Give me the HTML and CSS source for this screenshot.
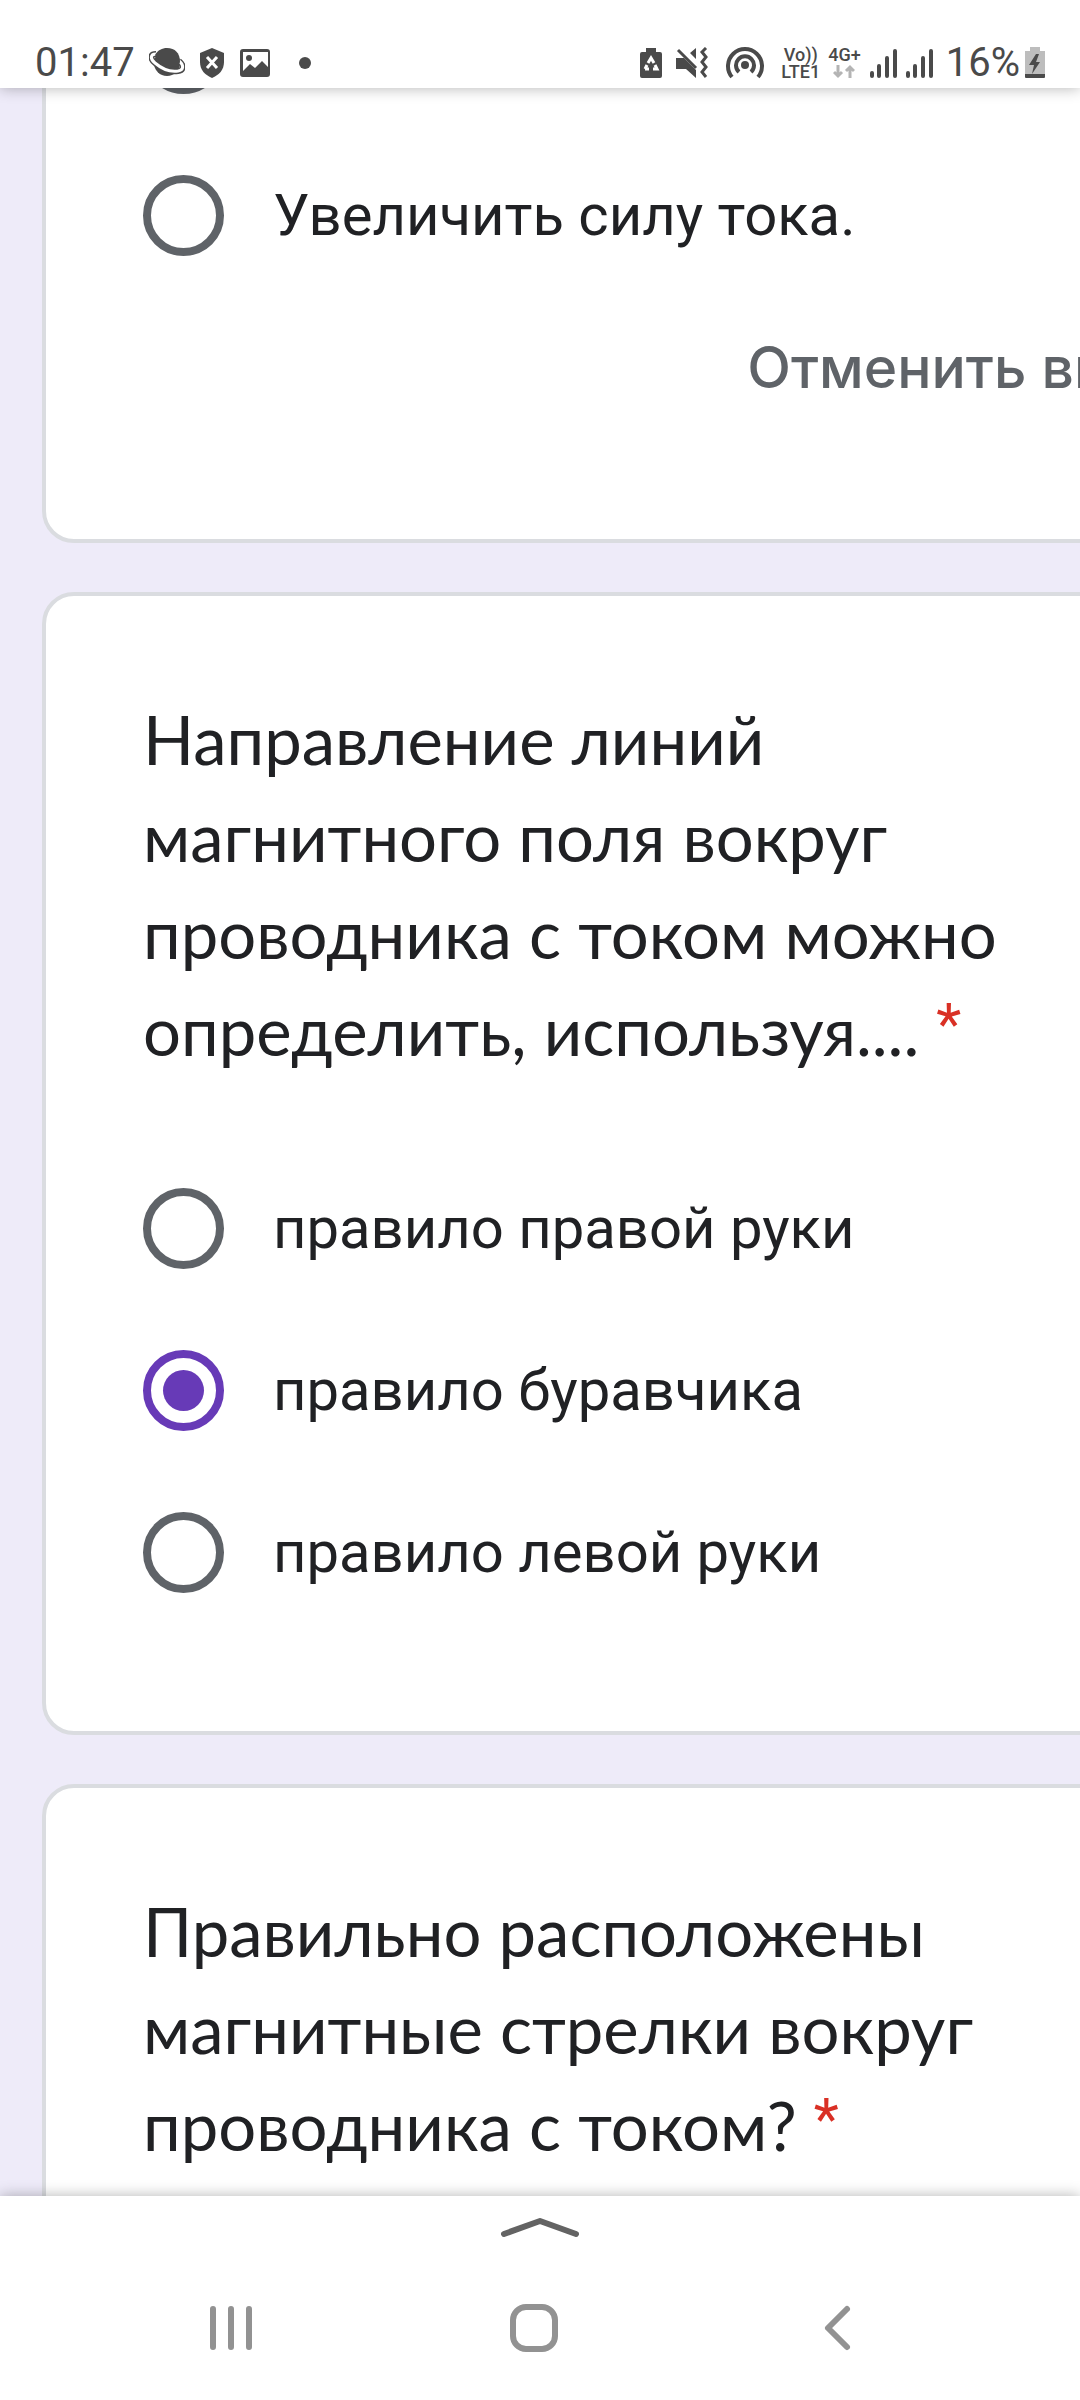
FILE: index.html
```html
<!DOCTYPE html>
<html lang="ru">
<head>
    <meta charset="UTF-8">
    <meta name="viewport" content="width=device-width, initial-scale=1.0">
    <title>Тест</title>
    <link rel="stylesheet" href="styles.css">
</head>
<body>
    <header class="status-bar">
        <div class="status-left">
            <span class="status-text">01:47</span>
            <svg width="36" height="32" viewBox="0 0 36 32">
                <circle cx="18" cy="16" r="13" fill="#4a4a4a"/>
                <path d="M7 7C1 7 1 12 6 16c7 6 16 9 23 8 6-1 6-6 1-10" fill="none" stroke="#4a4a4a" stroke-width="6"/>
                <path d="M7 7C1 7 1 12 6 16c7 6 16 9 23 8 6-1 6-6 1-10" fill="none" stroke="#fff" stroke-width="3"/>
                <path d="M6 8c3-5 7-7 12-7 8 0 13 5 13 14-1 3-2 5-4 5C19 19 10 15 6 8z" fill="#4a4a4a"/>
            </svg>
            <svg width="26" height="32" viewBox="0 0 26 32">
                <path d="M13 1l12 5v9c0 8-5 13-12 16C6 28 1 23 1 15V6z" fill="#4a4a4a"/>
                <path d="M8 10l10 11M18 10L8 21" stroke="#fff" stroke-width="3"/>
            </svg>
            <svg width="32" height="32" viewBox="0 0 32 32">
                <path fill-rule="evenodd" d="M4 2h24a3 3 0 0 1 3 3v22a3 3 0 0 1-3 3H4a3 3 0 0 1-3-3V5a3 3 0 0 1 3-3zm0 3v19l7-7 5 4 7-7 6 6V5z" fill="#4a4a4a"/>
                <circle cx="10" cy="11" r="3" fill="#4a4a4a"/>
            </svg>
            <svg width="40" height="32" viewBox="0 0 40 32">
                <circle cx="20" cy="16" r="6" fill="#4a4a4a"/>
            </svg>
        </div>
        <div class="status-right">
            <div class="status-icons">
                <svg width="22" height="32" viewBox="0 0 22 32">
                    <path d="M6 1h10v4h4a2 2 0 0 1 2 2v22a2 2 0 0 1-2 2H2a2 2 0 0 1-2-2V7a2 2 0 0 1 2-2h4z" fill="#4a4a4a"/>
                    <path d="M8 16l3-5 3 5M15 18l2 4h-4M5 22l2-4M5 22h4" fill="none" stroke="#fff" stroke-width="3"/>
                </svg>
                <svg width="32" height="32" viewBox="0 0 32 32">
                    <path d="M0 11h8l12 12v8l-10-9H0zM20 1v11l-6-6z" fill="#4a4a4a"/>
                    <path d="M2 3l18 18" stroke="#4a4a4a" stroke-width="3"/>
                    <path d="M30 1l-4 4 4 5-4 5 4 5-4 5 4 5" fill="none" stroke="#4a4a4a" stroke-width="3"/>
                </svg>
                <svg width="46" height="34" viewBox="0 0 46 34">
                    <circle cx="23" cy="19" r="4" fill="#4a4a4a"/>
                    <path d="M17 26a9 9 0 1 1 12 0M10 31a17 17 0 1 1 26 0" fill="none" stroke="#4a4a4a" stroke-width="4"/>
                </svg>
            </div>
            <div class="status-icons status-icons-tight">
                <div class="network">
                    <span>Vo))</span>
                    <span>LTE1</span>
                </div>
                <div class="network">
                    <span>4G+</span>
                    <svg width="22" height="17" viewBox="0 0 22 17">
                        <path d="M5 2v11M1 9l4 4 4-4M17 15V4M13 8l4-4 4 4" fill="none" stroke="#b4b4b4" stroke-width="3"/>
                    </svg>
                </div>
                <svg width="28" height="32" viewBox="0 0 28 32">
                    <path d="M3 29v-3M10 29V19M18 29V11M26 29V4" stroke="#4a4a4a" stroke-width="4" stroke-linecap="round"/>
                </svg>
                <svg width="28" height="32" viewBox="0 0 28 32">
                    <path d="M3 29v-3M10 29V19M18 29V11M26 29V4" stroke="#4a4a4a" stroke-width="4" stroke-linecap="round"/>
                </svg>
            </div>
            <div class="battery">
                <span class="status-text">16%</span>
                <svg width="20" height="32" viewBox="0 0 20 32">
                    <path d="M5 0h10v4h5v23H0V4h5z" fill="#bdbdbd"/>
                    <path d="M0 27h20v3a1 1 0 0 1-1 1H1a1 1 0 0 1-1-1z" fill="#4a4a4a"/>
                    <path d="M11 7L4 18h5l-2 9 8-12h-4l3-8z" fill="#4a4a4a"/>
                </svg>
            </div>
        </div>
    </header>

    <main class="page">
        <form class="form">
            <section class="card card-scrolled">
                <div class="options">
                    <label class="option"><input type="radio" name="q1"></label>
                    <label class="option"><input type="radio" name="q1">Увеличить силу тока.</label>
                </div>
                <button type="reset" class="clear-btn">Отменить выбор</button>
            </section>

            <section class="card">
                <h2 class="question">Направление линий магнитного поля вокруг проводника с током можно определить, используя.... <span class="required">*</span></h2>
                <div class="options">
                    <label class="option"><input type="radio" name="q2">правило правой руки</label>
                    <label class="option"><input type="radio" name="q2" checked>правило буравчика</label>
                    <label class="option"><input type="radio" name="q2">правило левой руки</label>
                </div>
            </section>

            <section class="card">
                <h2 class="question">Правильно расположены магнитные стрелки вокруг проводника с током? <span class="required">*</span></h2>
            </section>
        </form>
    </main>

    <footer class="bottom-bar">
        <button class="handle" aria-label="Развернуть">
            <svg width="80" height="22" viewBox="0 0 80 22">
                <path d="M4 18L40 5l36 13" fill="none" stroke="#636363" stroke-width="6" stroke-linecap="round" stroke-linejoin="round"/>
            </svg>
        </button>
        <nav class="nav">
            <button aria-label="Недавние">
                <svg width="48" height="48" viewBox="0 0 48 48">
                    <path d="M6 5v38M24 5v38M42 5v38" stroke="#929292" stroke-width="6" stroke-linecap="round"/>
                </svg>
            </button>
            <button aria-label="Главная">
                <svg width="48" height="48" viewBox="0 0 48 48">
                    <rect x="3" y="3" width="42" height="42" rx="13" fill="none" stroke="#929292" stroke-width="6"/>
                </svg>
            </button>
            <button aria-label="Назад">
                <svg width="48" height="48" viewBox="0 0 48 48">
                    <path d="M34 5L15 24l19 19" fill="none" stroke="#929292" stroke-width="6" stroke-linecap="round" stroke-linejoin="round"/>
                </svg>
            </button>
        </nav>
    </footer>
</body>
</html>
```
FILE: styles.css
```css
* {
    margin: 0;
    padding: 0;
    box-sizing: border-box;
}

body {
    background-color: #eeebf9;
    color: #202124;
    font-family: Roboto, sans-serif;
    display: flex;
    flex-direction: column;
    height: 100vh;
    overflow: hidden;
}

button {
    border: none;
    background: none;
    cursor: pointer;
}

svg {
    display: block;
}

/* status bar */
.status-bar {
    position: relative;
    z-index: 1;
    display: flex;
    justify-content: space-between;
    height: 88px;
    padding: 38px 35px 0;
    background-color: #fff;
    box-shadow: 0 0 14px rgba(0, 0, 0, 0.3);
    color: #4a4a4a;
}

.status-left,
.status-right,
.status-icons,
.battery {
    display: flex;
    align-items: center;
    gap: 14px;
}

.status-right {
    gap: 13px;
}

.status-icons-tight {
    gap: 8px;
}

.battery {
    gap: 5px;
}

.status-text {
    font-size: 40px;
    line-height: 50px;
}

.network {
    display: flex;
    flex-direction: column;
    align-items: center;
    font-size: 18px;
    font-weight: 500;
    line-height: 17px;
}

/* form */
.page {
    flex: 1;
    min-height: 0;
    overflow: hidden;
}

.form {
    display: flex;
    flex-direction: column;
    gap: 49px;
    margin: 0 -242px 0 42px;
}

.card {
    background-color: #fff;
    border: 4px solid #dadce0;
    border-radius: 32px;
    padding: 95px 97px 138px;
}

.card-scrolled {
    display: flex;
    flex-direction: column;
    gap: 71px;
    margin-top: -79px;
    padding: 0 97px 131px;
}

.question {
    max-width: 900px;
    margin-bottom: 109px;
    font-family: Lato, sans-serif;
    font-size: 67px;
    font-weight: 400;
    line-height: 97px;
}

.required {
    color: #d93025;
    font-family: Roboto, sans-serif;
    font-size: 58px;
    line-height: 58px;
    vertical-align: 12px;
}

.options {
    display: flex;
    flex-direction: column;
    gap: 81px;
}

.option {
    display: flex;
    align-items: center;
    gap: 49px;
    font-size: 58px;
    line-height: 81px;
}

.option input {
    appearance: none;
    display: grid;
    place-items: center;
    width: 81px;
    height: 81px;
    border: 8px solid #5f6368;
    border-radius: 50%;
}

.option input:checked {
    border-color: #673ab7;
}

.option input:checked::before {
    content: "";
    width: 41px;
    height: 41px;
    border-radius: 50%;
    background-color: #673ab7;
}

.clear-btn {
    align-self: flex-end;
    color: #5f6368;
    font-family: Inter, sans-serif;
    font-size: 57px;
    font-weight: 500;
    line-height: 81px;
}

/* bottom bar */
.bottom-bar {
    position: relative;
    z-index: 1;
    display: flex;
    flex-direction: column;
    align-items: center;
    gap: 66px;
    padding: 20px 0 48px;
    background-color: #fff;
    box-shadow: 0 0 14px rgba(0, 0, 0, 0.3);
}

.nav {
    display: flex;
    justify-content: center;
    width: 100%;
    padding-right: 12px;
}

.nav button {
    display: flex;
    justify-content: center;
    flex: 0 1 303px;
}
```
